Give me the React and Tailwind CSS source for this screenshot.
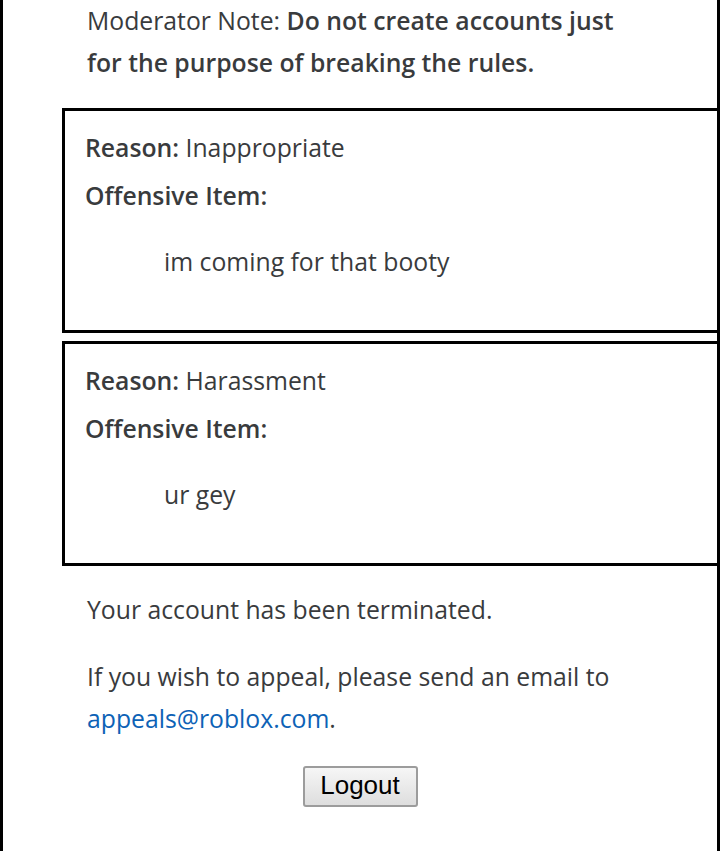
export default function App() {
  const font = { fontFamily: "'Open Sans', Lato, sans-serif" };
  const Box = ({ reason, item }) => (
    <div className="ml-[59px] border-t-[3px] border-l-[3px] border-b-[3px] border-black pl-[20px] pt-[19px] pb-[50px]">
      <p className="text-[24.75px] leading-[36px]">
        <span className="font-semibold">Reason:</span> {reason}
      </p>
      <p className="mt-[12px] text-[24.75px] leading-[36px] font-semibold">Offensive Item:</p>
      <p className="mt-[30px] pl-[79px] text-[24.75px] leading-[36px]">{item}</p>
    </div>
  );
  return (
    <div className="w-[720px] min-h-[851px] bg-white border-l-[3px] border-r-[3px] border-black text-[#393b3d]" style={font}>
      <div className="h-[108px] pl-[84px]">
        <p className="text-[24.75px] leading-[42px]">
          Moderator Note: <span className="font-semibold">Do not create accounts just<br />for the purpose of breaking the rules.</span>
        </p>
      </div>
      <Box reason="Inappropriate" item="im coming for that booty" />
      <div className="h-[8px]" />
      <Box reason="Harassment" item="ur gey" />
      <div className="pl-[84px] pt-[26px]">
        <p className="text-[24.75px] leading-[36px]">Your account has been terminated.</p>
        <p className="mt-[28px] text-[24.75px] leading-[42px]">
          If you wish to appeal, please send an email to
          <br />
          <a className="text-[#0d62b6]" href="#">appeals@roblox.com</a>.
        </p>
      </div>
      <div className="flex justify-center mt-[26px]">
        <button
          className="w-[115px] h-[41px] rounded-[3px] border-2 border-[#9c9c9c] bg-gradient-to-b from-[#f6f6f6] to-[#dedede] pb-[4px] text-[26px] leading-none text-black"
          style={{ fontFamily: "'Liberation Sans', Arial, sans-serif" }}
        >
          Logout
        </button>
      </div>
    </div>
  );
}
